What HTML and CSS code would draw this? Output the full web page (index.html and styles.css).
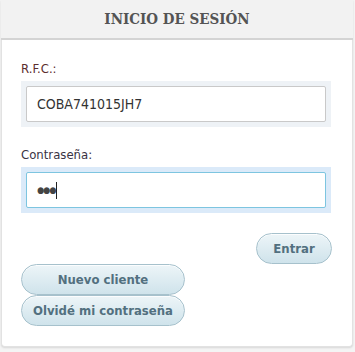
FILE: index.html
```html
<!DOCTYPE html>
<html lang="es">
<head>
<meta charset="utf-8">
<link rel="stylesheet" href="styles.css">
</head>
<body>
<div class="panel">
  <div class="panel-header">INICIO DE SESIÓN</div>
  <div class="panel-body">
    <label class="label label-rfc">R.F.C.:</label>
    <div class="field">
      <input class="input" type="text" value="COBA741015JH7">
    </div>
    <label class="label label-pass">Contraseña:</label>
    <div class="field field-focus">
      <div class="input input-focus"><span class="dots">●●●</span><span class="caret"></span></div>
    </div>
    <div class="actions">
      <button class="btn btn-enter">Entrar</button>
    </div>
    <div class="links">
      <button class="btn btn-wide">Nuevo cliente</button>
      <button class="btn btn-wide">Olvidé mi contraseña</button>
    </div>
  </div>
</div>
</body>
</html>
```
FILE: styles.css
```css
html, body {
  margin: 0;
  padding: 0;
}
body {
  background: #f4f4f4;
  width: 355px;
  height: 352px;
  overflow: hidden;
  font-family: "DejaVu Sans", sans-serif;
  font-stretch: condensed;
}
.panel {
  width: 350px;
  margin-left: 1px;
  background: #fff;
  border: 1px solid #e2e2e2;
  border-top: none;
  border-radius: 0 0 4px 4px;
  box-shadow: 0 1px 2px rgba(0,0,0,0.12);
}
.panel-header {
  height: 38px;
  margin-left: -1px;
  margin-right: -1px;
  background: #f2f2f2;
  border-bottom: 2px solid #d4d4d4;
  text-align: center;
  line-height: 39px;
  font-family: "DejaVu Serif", "Liberation Serif", serif;
  font-stretch: condensed;
  font-weight: bold;
  font-size: 15px;
  color: #545454;
}
.panel-body {
  padding: 21px 19px 20px 19px;
}
.label {
  display: block;
  font-size: 13px;
  line-height: 16px;
  margin-bottom: 4px;
}
.label-rfc { color: #5b2e2e; }
.label-pass { color: #3a3344; margin-top: 20px; }
.field {
  background: #eef2f6;
  padding: 5px;
  width: 300px;
}
.field-focus { background: #dbeaf9; }
.input {
  box-sizing: border-box;
  display: block;
  width: 300px;
  height: 36px;
  border: 1px solid #c9c9c9;
  border-radius: 2px;
  background: #fff;
  padding: 0 10px;
  font-family: inherit;
  font-stretch: condensed;
  font-size: 14px;
  color: #333;
  outline: none;
}
.input-focus {
  border-color: #7dc5e0;
  display: flex;
  align-items: center;
}
.dots {
  font-size: 9px;
  letter-spacing: -1px;
  color: #444;
}
.caret {
  width: 1px;
  height: 17px;
  background: #222;
  margin-left: 1px;
}
.actions {
  display: flex;
  justify-content: flex-end;
  margin-top: 20px;
  padding-right: 1px;
}
.btn {
  font-family: inherit;
  font-stretch: condensed;
  font-weight: bold;
  font-size: 13px;
  color: #52707f;
  border: 1px solid #a6c1cc;
  border-radius: 16px;
  background: linear-gradient(#edf5f8, #cfe3eb);
  height: 31px;
  padding: 0;
  box-shadow: inset 0 1px 0 rgba(255,255,255,0.8);
}
.btn-enter { width: 76px; }
.links {
  display: flex;
  flex-direction: column;
}
.btn-wide { width: 164px; }
```
